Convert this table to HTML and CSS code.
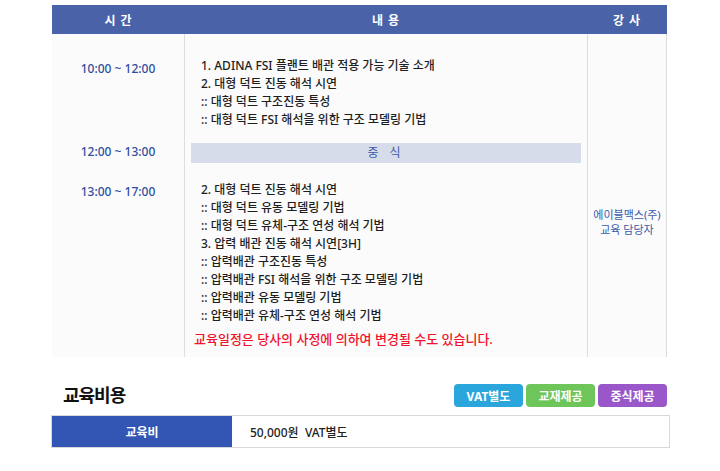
FILE: index.html
```html
<!DOCTYPE html>
<html lang="ko">
<head>
<meta charset="utf-8">
<link rel="stylesheet" href="styles.css">
</head>
<body>
<div class="page">
  <div class="schedule">
    <div class="head">
      <div class="hc c1">시 간</div>
      <div class="hc c2">내 용</div>
      <div class="hc c3">강 사</div>
    </div>
    <div class="body">
      <div class="col1">
        <div class="t t1">10:00 ~ 12:00</div>
        <div class="t t2">12:00 ~ 13:00</div>
        <div class="t t3">13:00 ~ 17:00</div>
      </div>
      <div class="col2">
        <ul class="list l1">
          <li>1. ADINA FSI 플랜트 배관 적용 가능 기술 소개</li>
          <li>2. 대형 덕트 진동 해석 시연</li>
          <li>:: 대형 덕트 구조진동 특성</li>
          <li>:: 대형 덕트 FSI 해석을 위한 구조 모델링 기법</li>
        </ul>
        <div class="lunch">중 식</div>
        <ul class="list l2">
          <li>2. 대형 덕트 진동 해석 시연</li>
          <li>:: 대형 덕트 유동 모델링 기법</li>
          <li>:: 대형 덕트 유체-구조 연성 해석 기법</li>
          <li>3. 압력 배관 진동 해석 시연[3H]</li>
          <li>:: 압력배관 구조진동 특성</li>
          <li>:: 압력배관 FSI 해석을 위한 구조 모델링 기법</li>
          <li>:: 압력배관 유동 모델링 기법</li>
          <li>:: 압력배관 유체-구조 연성 해석 기법</li>
        </ul>
        <p class="notice">교육일정은 당사의 사정에 의하여 변경될 수도 있습니다.</p>
      </div>
      <div class="col3">
        <div class="lect">에이블맥스(주)<br>교육 담당자</div>
      </div>
    </div>
  </div>

  <div class="cost-head">
    <h2 class="cost-title">교육비용</h2>
    <div class="badges">
      <span class="badge b-blue">VAT별도</span>
      <span class="badge b-green">교재제공</span>
      <span class="badge b-purple">중식제공</span>
    </div>
  </div>
  <div class="fee">
    <div class="fee-label">교육비</div>
    <div class="fee-value">50,000원&nbsp;&nbsp;VAT별도</div>
  </div>
</div>
</body>
</html>
```
FILE: styles.css
```css
* { box-sizing: border-box; }
html, body { margin: 0; padding: 0; background: #fff; }
body {
  font-family: "Noto Sans", "Noto Sans CJK KR", sans-serif;
  color: #222;
}
.page {
  width: 720px;
  padding: 5px 0 0 52px;
}
.schedule { width: 615px; }
.head {
  display: grid;
  grid-template-columns: 133px 402px 80px;
  height: 29px;
  background: #4a63a8;
}
.hc {
  color: #fff;
  font-size: 12px;
  font-weight: 700;
  display: flex;
  align-items: center;
  justify-content: center;
  letter-spacing: 1px;
}
.body {
  display: grid;
  grid-template-columns: 133px 402px 80px;
  height: 323px;
  background: #fbfbfb;
}
.col1 {
  border-right: 1px solid #ddd;
  position: relative;
}
.t {
  color: #2f4e9c;
  font-size: 12px;
  font-weight: 500;
  text-align: center;
  position: absolute;
  left: 0; right: 0;
  line-height: 16px;
}
.t1 { top: 27px; }
.t2 { top: 110px; }
.t3 { top: 150px; }
.col2 { padding: 23px 6px 0 6px; }
.list {
  list-style: none;
  margin: 0;
  padding: 0 0 0 10px;
}
.list li {
  font-size: 12px;
  font-weight: 500;
  line-height: 18px;
  color: #1e1e1e;
  white-space: nowrap;
}
.lunch {
  margin: 14px 0 18px 0;
  height: 20px;
  background: #d6dce9;
  color: #3a5aa8;
  font-size: 12px;
  text-align: center;
  line-height: 20px;
  letter-spacing: 4px;
}
.notice {
  margin: 5px 0 0 3px;
  color: #f0132c;
  font-size: 13px;
  font-weight: 500;
  line-height: 18px;
  white-space: nowrap;
}
.col3 {
  border-left: 1px solid #ddd;
  border-right: 1px solid #ddd;
  display: flex;
  align-items: center;
  justify-content: center;
}
.lect {
  color: #3a5aa8;
  font-size: 11px;
  text-align: center;
  line-height: 15px;
  margin-top: 52px;
}
.cost-head {
  width: 615px;
  display: flex;
  justify-content: space-between;
  align-items: flex-end;
  margin-top: 26px;
  padding-left: 11px;
}
.cost-title {
  margin: 0;
  font-size: 18px;
  font-weight: 700;
  color: #111;
  line-height: 24px;
  letter-spacing: -1px;
}
.badges { display: flex; gap: 3px; }
.badge {
  width: 69px;
  height: 23px;
  border-radius: 4px;
  color: #fff;
  font-size: 12px;
  font-weight: 700;
  display: flex;
  align-items: center;
  justify-content: center;
}
.b-blue { background: #2ba6dc; }
.b-green { background: #6ec65b; }
.b-purple { background: #9957c9; }
.fee {
  margin: 8px 0 0 -1px;
  width: 619px;
  height: 33px;
  display: grid;
  grid-template-columns: 180px 1fr;
  border: 1px solid #d8d8d8;
}
.fee-label {
  background: #3355b3;
  color: #fff;
  font-size: 12px;
  font-weight: 700;
  display: flex;
  align-items: center;
  justify-content: center;
}
.fee-value {
  font-size: 12px;
  font-weight: 500;
  color: #222;
  display: flex;
  align-items: center;
  padding-left: 18px;
}
```
